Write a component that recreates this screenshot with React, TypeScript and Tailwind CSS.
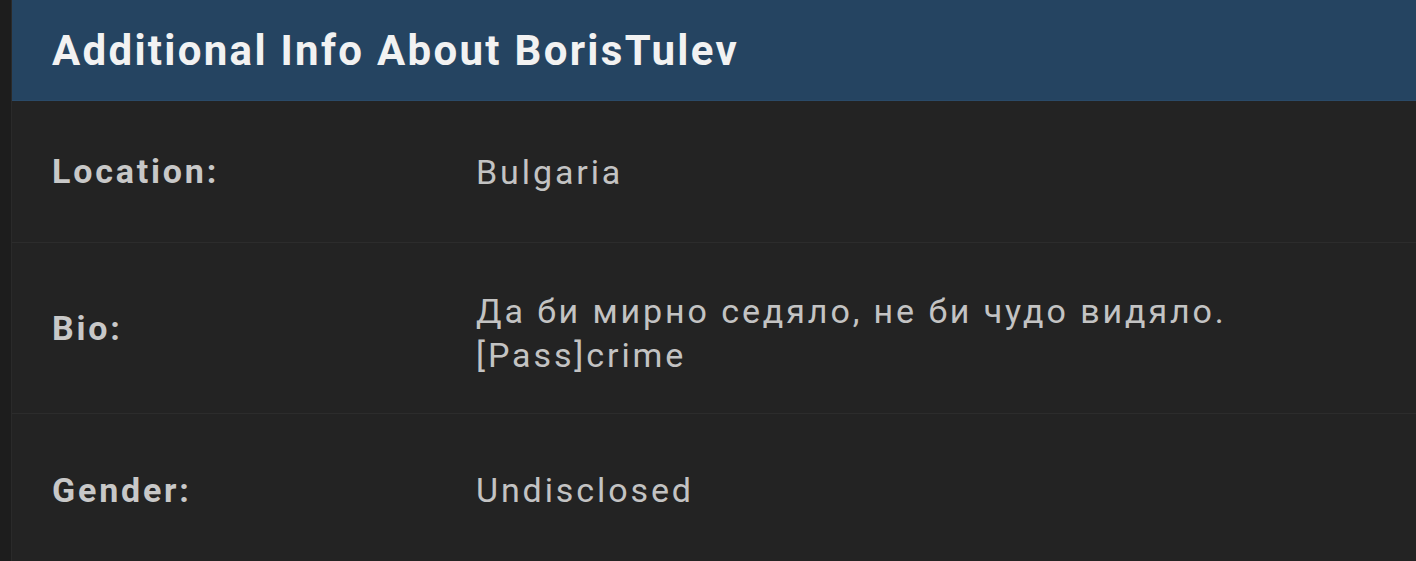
import React from 'react';

const rows = [
  { label: 'Location:', value: ['Bulgaria'], h: 'h-[141px]', pad: '' },
  { label: 'Bio:', value: ['Да би мирно седяло, не би чудо видяло.', '[Pass]crime'], h: 'h-[171px]', pad: 'pt-[10px]' },
  { label: 'Gender:', value: ['Undisclosed'], h: 'h-[153px]', pad: '' },
];

const App: React.FC = () => {
  return (
    <div className="h-[561px] w-full overflow-hidden bg-[#1d1d1d] pl-[11px] font-['Roboto',sans-serif]">
      <div className="h-full border-l border-[#2a2a2a] bg-[#232323]">
        <div className="flex h-[101px] items-center bg-[#254461] px-10 border-b border-[#2a4a68]">
          <h3 className="text-[42px] font-bold tracking-[2.3px] text-[#f2f2f2]">Additional Info About BorisTulev</h3>
        </div>
        {rows.map((r, i) => (
          <div
            key={r.label}
            className={`grid grid-cols-[424px_1fr] items-center px-10 ${r.h} ${i > 0 ? 'border-t border-[#2c2c2c]' : ''}`}
          >
            <div className="text-[34px] font-bold tracking-[2.8px] text-[#c8c8c8]">{r.label}</div>
            <div className={`text-[34px] leading-[44px] tracking-[2.9px] text-[#c3c3c3] ${r.pad}`}>
              {r.value.map((v) => (
                <div key={v}>{v}</div>
              ))}
            </div>
          </div>
        ))}
      </div>
    </div>
  );
};

export default App;
